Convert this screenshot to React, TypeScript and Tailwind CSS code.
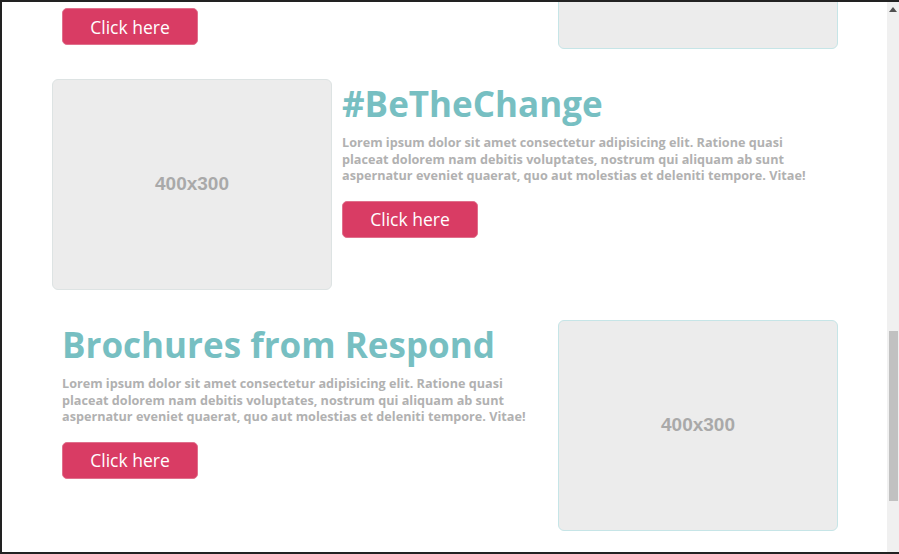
import React from "react";

const lorem =
    "Lorem ipsum dolor sit amet consectetur adipisicing elit. Ratione quasi placeat dolorem nam debitis voluptates, nostrum qui aliquam ab sunt aspernatur eveniet quaerat, quo aut molestias et deleniti tempore. Vitae!";

function Placeholder({teal, hideLabel}: { teal?: boolean; hideLabel?: boolean }) {
    return (
        <div
            className={`w-[280px] h-[211px] shrink-0 rounded-[6px] bg-[#ececec] border flex items-center justify-center ${teal ? "border-[#c6e5e7]" : "border-[#dde3e3]"}`}>
            {!hideLabel && (
                <span className="font-['Liberation_Sans',Arial,sans-serif] font-bold text-[19px] text-[#a9a9a9]">400x300</span>
            )}
        </div>
    );
}

function ClickButton() {
    return (
        <button
            className="w-[136px] h-[37px] pt-[2px] rounded-[5px] bg-[#d93c64] border border-[#e0708c] text-white text-[17.5px] font-normal leading-none">
            Click here
        </button>
    );
}

function TextBlock({title}: { title: string }) {
    return (
        <div className="flex flex-col items-start">
            <h2 className="text-[35px] font-bold text-[#77bfc2] leading-[49px]">{title}</h2>
            <p className="mt-[6px] max-w-[480px] text-[12.65px] font-bold leading-[16.5px] text-[#b1b1b1]">{lorem}</p>
            <div className="mt-[17px]">
                <ClickButton/>
            </div>
        </div>
    );
}

export default function App() {
    return (
        <div
            className="w-[899px] h-[554px] overflow-hidden bg-white flex border-t-2 border-l-2 border-b-2 border-[#222] font-['Open_Sans',sans-serif]">
            <div className="flex-1 overflow-hidden">
                <div className="pl-[50px] pr-[49px] flex flex-col gap-[30px]">
                    {/* row scrolled partly out of view */}
                    <div className="flex -mt-[164px]">
                        <div className="flex-1 pl-[10px] pb-[4px] flex flex-col justify-end items-start">
                            <ClickButton/>
                        </div>
                        <Placeholder teal hideLabel/>
                    </div>

                    <div className="flex">
                        <Placeholder/>
                        <div className="flex-1 pl-[10px]">
                            <TextBlock title="#BeTheChange"/>
                        </div>
                    </div>

                    <div className="flex">
                        <div className="flex-1 pl-[10px]">
                            <TextBlock title="Brochures from Respond"/>
                        </div>
                        <Placeholder teal/>
                    </div>
                </div>
            </div>

            <div className="w-[12px] bg-[#f0f0f0] flex flex-col items-center">
                <svg width="8" height="5" viewBox="0 0 8 5" className="mt-[5px]">
                    <polygon points="4,0 8,5 0,5" fill="#505050"/>
                </svg>
                <div className="w-[9px] h-[170px] bg-[#c1c1c1] mt-[319px]"/>
            </div>
        </div>
    );
}
